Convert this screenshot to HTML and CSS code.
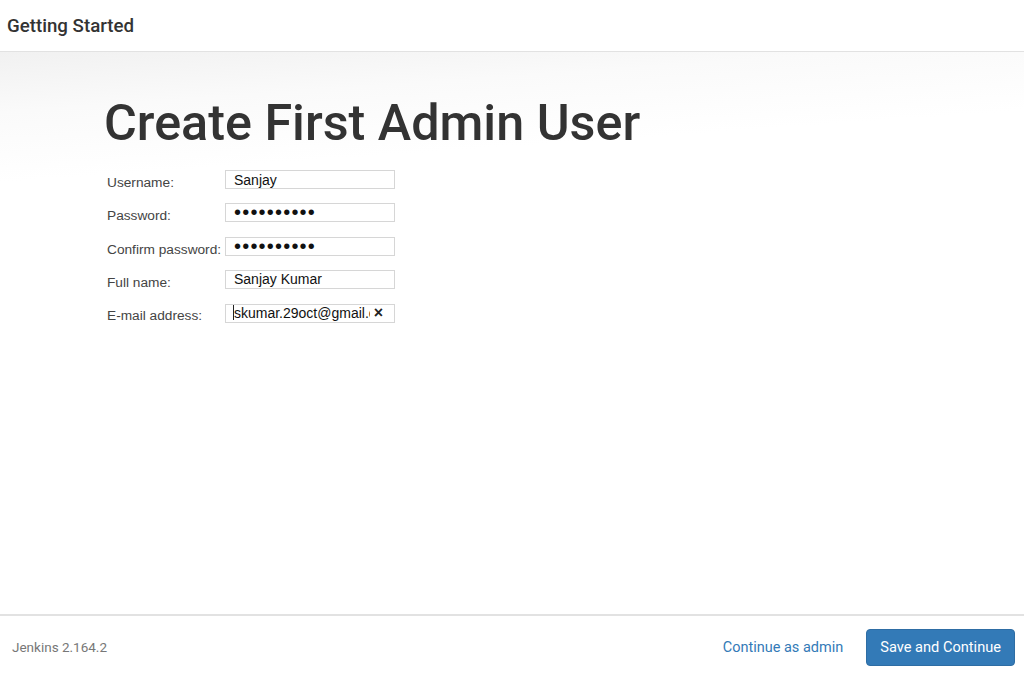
FILE: index.html
```html
<!DOCTYPE html>
<html lang="en">
<head>
    <meta charset="UTF-8">
    <title>Getting Started</title>
    <link rel="stylesheet" href="styles.css">
</head>
<body>
    <div class="page">
        <header class="top_bar">
            <h1 class="top_title">Getting Started</h1>
        </header>

        <main class="setup_body">
            <h2 class="setup_heading">Create First Admin User</h2>
            <form class="admin_form">
                <div class="form_row">
                    <label class="form_label" for="username">Username:</label>
                    <input class="form_input" type="text" id="username" value="Sanjay">
                </div>
                <div class="form_row">
                    <label class="form_label" for="password1">Password:</label>
                    <input class="form_input form_secret" type="password" id="password1" value="abcdefghij">
                </div>
                <div class="form_row">
                    <label class="form_label" for="password2">Confirm password:</label>
                    <input class="form_input form_secret" type="password" id="password2" value="abcdefghij">
                </div>
                <div class="form_row">
                    <label class="form_label" for="fullname">Full name:</label>
                    <input class="form_input" type="text" id="fullname" value="Sanjay Kumar">
                </div>
                <div class="form_row">
                    <label class="form_label" for="email">E-mail address:</label>
                    <div class="input_wrap">
                        <input class="form_input form_email" type="text" id="email" value="skumar.29oct@gmail.com">
                        <span class="caret"></span>
                        <span class="clear_btn">&times;</span>
                    </div>
                </div>
            </form>
        </main>

        <footer class="bottom_bar">
            <span class="version">Jenkins 2.164.2</span>
            <div class="actions">
                <a class="skip_link" href="#">Continue as admin</a>
                <button class="save_btn" type="button">Save and Continue</button>
            </div>
        </footer>
    </div>
</body>
</html>
```

FILE: styles.css
```css
html, body {
    height: 100%;
}
body {
    margin: 0;
    font-family: Roboto, "Liberation Sans", sans-serif;
    color: #333;
    background: #fff;
}
.page {
    height: 100%;
    display: flex;
    flex-direction: column;
}

.top_bar {
    height: 51px;
    border-bottom: 1px solid #e2e2e2;
    display: flex;
    align-items: center;
    padding-left: 7px;
}
.top_title {
    margin: 0;
    font-size: 18.7px;
    font-weight: 500;
    color: #333;
}

.setup_body {
    flex: 1;
    padding: 41px 0 0 104px;
    background: linear-gradient(176deg, #f1f1f1 0px, #fafafa 60px, #fff 130px);
}
.setup_heading {
    margin: 0 0 17px;
    font-size: 50.3px;
    font-weight: 500;
    line-height: 60px;
    color: #333;
}

.admin_form {
    display: flex;
    flex-direction: column;
    gap: 15px;
    padding-left: 3px;
}
.form_row {
    display: flex;
    align-items: flex-start;
    height: 18.3px;
}
.form_label {
    width: 118px;
    font-family: "Liberation Sans", Arial, sans-serif;
    font-size: 13.7px;
    color: #444;
    padding-top: 5px;
}
.form_input {
    box-sizing: border-box;
    width: 170px;
    height: 19px;
    border: 1px solid #d6d6d6;
    padding: 0 0 0 8px;
    font-family: "Liberation Sans", Arial, sans-serif;
    font-size: 14px;
    color: #111;
    background: #fff;
    outline: none;
}
.form_secret {
    font-size: 20px;
    letter-spacing: 1.2px;
    padding-left: 8px;
}
.input_wrap {
    position: relative;
}
.form_email {
    padding-right: 24px;
}
.caret {
    position: absolute;
    left: 8px;
    top: 2px;
    width: 1px;
    height: 15px;
    background: #222;
}
.clear_btn {
    position: absolute;
    right: 12px;
    top: 0;
    font-family: "Liberation Sans", Arial, sans-serif;
    font-size: 16px;
    line-height: 19px;
    font-weight: bold;
    color: #222;
}

.bottom_bar {
    height: 62px;
    border-top: 2px solid #e2e2e2;
    display: flex;
    align-items: center;
    justify-content: space-between;
    padding: 0 9px 0 12px;
}
.version {
    font-size: 13.5px;
    color: #777;
}
.actions {
    display: flex;
    align-items: center;
    gap: 23px;
}
.skip_link {
    font-size: 14.5px;
    color: #337ab7;
    text-decoration: none;
}
.save_btn {
    height: 37px;
    padding: 0 13px;
    border: 1px solid #2e6da4;
    border-radius: 4px;
    background: #337ab7;
    color: #fff;
    font-family: Roboto, "Liberation Sans", sans-serif;
    font-size: 14.6px;
    cursor: pointer;
}
```
